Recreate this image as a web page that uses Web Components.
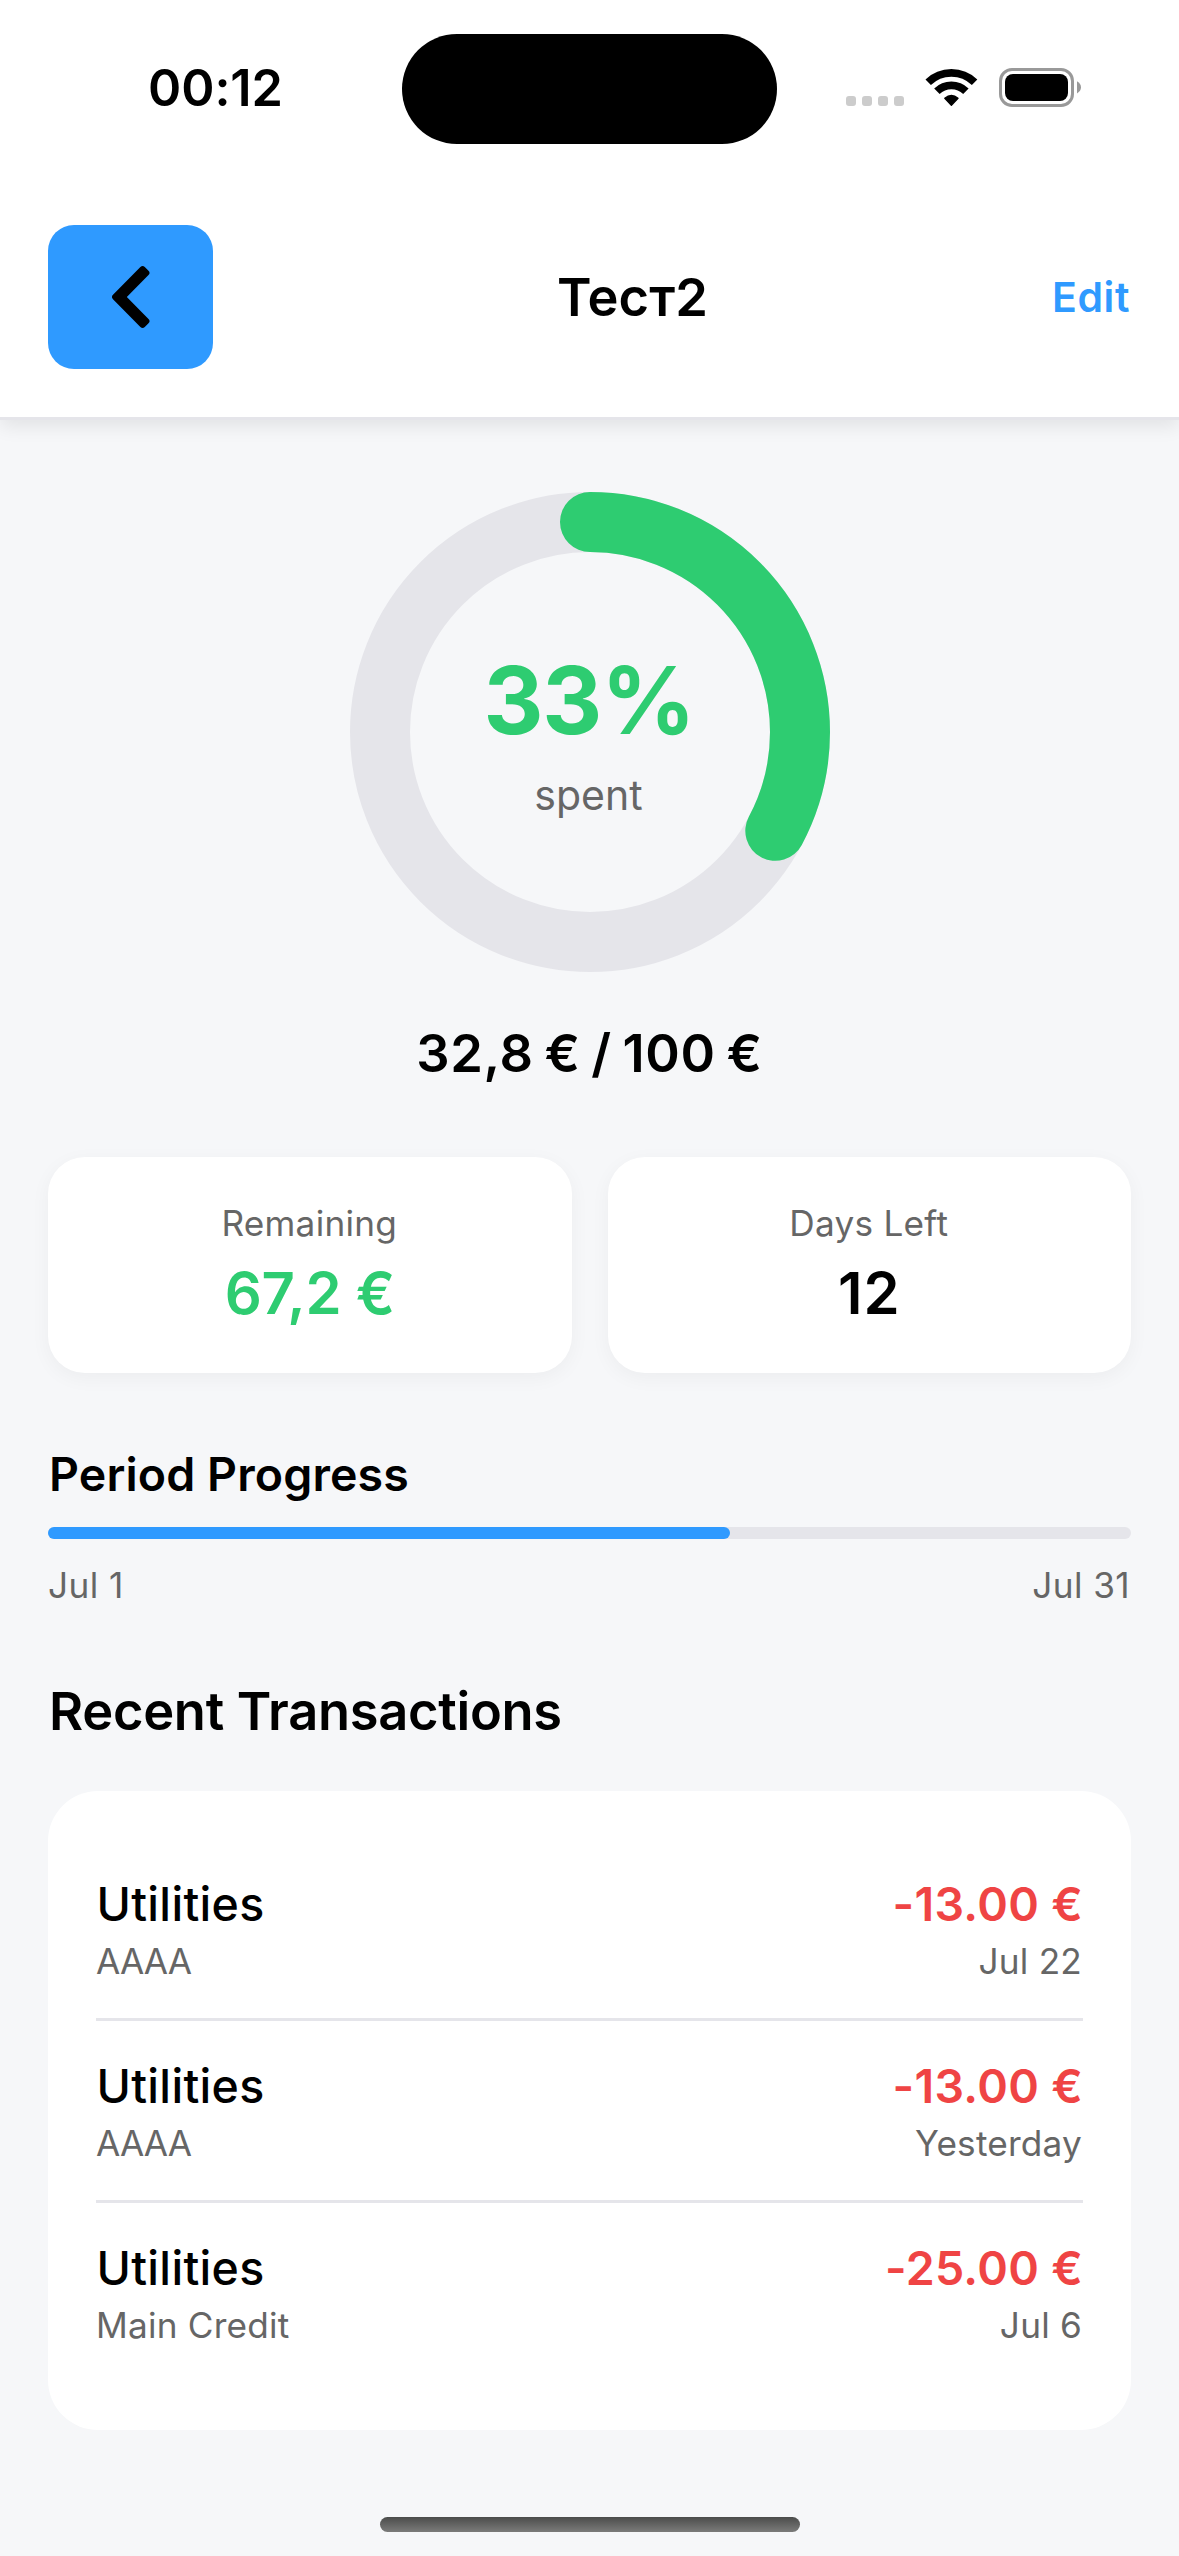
<!DOCTYPE html>
<html lang="en">
<head>
<meta charset="utf-8">
<title>Budget</title>
<style>
html,body{margin:0;padding:0}
body{width:1179px;height:2556px;overflow:hidden;background:#f6f7f9;color:#000;font-family:Inter,"Liberation Sans",sans-serif;-webkit-font-smoothing:antialiased}
</style>
</head>
<body>
<budget-screen></budget-screen>
<script>
const define = (name, html, setup) => {
  const template = document.createElement('template');
  template.innerHTML = html;
  customElements.define(name, class extends HTMLElement {
    constructor() {
      super();
      this.attachShadow({ mode: 'open' }).append(template.content.cloneNode(true));
    }
    connectedCallback() { if (setup) setup(this, this.shadowRoot); }
  });
};

define('status-bar', `
<style>
:host{display:grid;grid-template-columns:402px 375px 402px;height:177px;box-sizing:border-box;padding-top:33px;align-items:start;background:#fff}
.time{padding-left:29px;text-align:center;font-size:50.4px;font-weight:600;line-height:110px;letter-spacing:-.1px}
.island{height:110px;margin-top:1px;border-radius:55px;background:#000}
.right{display:flex;padding-left:69px;padding-top:35px;height:40px}
svg{display:block}
</style>
<div class="time">00:12</div>
<div class="island"></div>
<div class="right">
<svg width="240" height="40" viewBox="846 68 240 40">
<g fill="#ccc"><rect x="846" y="96" width="10" height="10" rx="3"/><rect x="862" y="96" width="10" height="10" rx="3"/><rect x="878" y="96" width="10" height="10" rx="3"/><rect x="894" y="96" width="10" height="10" rx="3"/></g>
<g fill="none" stroke="#000" stroke-width="7.8">
<path d="M928.2 82.3A33.3 33.3 0 0 1 974.6 82.3"/>
<path d="M936.9 91.2A20.8 20.8 0 0 1 965.9 91.2"/></g>
<path d="M951.4 105.2L944.8 98.3Q951.4 92.7 958 98.3Z" stroke="#000" stroke-width="1.4" stroke-linejoin="round"/>
<rect x="1000.5" y="69.5" width="72" height="36" rx="11.5" fill="none" stroke="#999" stroke-width="3"/>
<rect x="1005" y="74" width="63" height="27" rx="8"/>
<path d="M1077 81.2Q1081 83.5 1081 87.2T1077 93.4Z" fill="#999"/>
</svg>
</div>`);

define('nav-header', `
<style>
:host{display:flex;justify-content:space-between;align-items:center;height:243px;box-sizing:border-box;padding:0 48px;background:#fff;border-bottom:3px solid #e5e5ea;box-shadow:0 6px 18px rgba(0,0,0,.085);clip-path:inset(0 0 -40px 0)}
button{display:block;width:165px;height:144px;padding:0;border:0;border-radius:26px;background:#2f9aff}
svg{display:block}
h1{margin:0;font-size:52.4px;font-weight:600;line-height:64px;letter-spacing:.1px}
.edit{color:#2f9aff;font-size:41px;font-weight:600;line-height:50px;letter-spacing:.6px;padding-right:1px}
</style>
<button aria-label="Back"><svg width="165" height="144" viewBox="48 225 165 144"><path d="M115.2 297L142.6 269.2L146.3 272.9L122.4 297L146.3 321.1L142.6 324.8Z" stroke="#000" stroke-width="6.2" stroke-linejoin="round"/></svg></button>
<h1><slot></slot></h1>
<span class="edit">Edit</span>`);

define('progress-ring', `
<style>
:host{display:grid;width:480px;height:480px;margin:72px 0 0 1px}
svg,.label{grid-area:1/1}
.label{display:flex;flex-direction:column;align-items:center;padding-top:152px}
.value{color:#2ecc71;font-size:93px;font-weight:700;line-height:112px;letter-spacing:-1.2px;padding-right:2px}
.caption{color:#666;font-size:41px;line-height:50px;margin-top:14px;padding-right:3px}
</style>
<svg width="480" height="480" viewBox="0 0 480 480" fill="none" stroke-width="60">
<circle cx="240" cy="240" r="210" stroke="#e5e5ea"/>
<circle class="arc" cx="240" cy="240" r="210" stroke="#2ecc71" stroke-linecap="round" transform="rotate(-90 240 240)" pathLength="100"/>
</svg>
<div class="label"><div class="value"></div><div class="caption"><slot></slot></div></div>`, (el, root) => {
  const p = parseFloat(el.getAttribute('percent'));
  root.querySelector('.arc').setAttribute('stroke-dasharray', p + ' 100');
  root.querySelector('.value').textContent = Math.round(p) + '%';
});

define('stat-card', `
<style>
:host{display:flex;flex:1;flex-direction:column;align-items:center;box-sizing:border-box;height:216px;padding-top:45px;gap:13px;border-radius:37px;background:#fff;box-shadow:0 5px 20px rgba(0,0,0,.045)}
.label{color:#666;font-size:35.2px;line-height:42px;letter-spacing:.25px;padding-right:1px}
.value{color:var(--value,#000);font-size:58px;font-weight:600;line-height:72px;letter-spacing:var(--value-spacing,-.3px)}
</style>
<div class="label"><slot name="label"></slot></div><div class="value"><slot></slot></div>`);

define('period-progress', `
<style>
:host{display:block;margin-top:72px}
h2{margin:0 0 24px;padding-left:1px;font-size:46.5px;font-weight:600;line-height:58px;letter-spacing:.12px}
.track{height:12px;border-radius:6px;background:#e5e5ea}
.fill{height:12px;border-radius:6px;background:#2f9aff}
.dates{display:flex;justify-content:space-between;margin-top:25px;padding-right:1px;color:#666;font-size:35.2px;line-height:42px;letter-spacing:.4px}
</style>
<h2>Period Progress</h2>
<div class="track"><div class="fill"></div></div>
<div class="dates"><slot name="from"></slot><slot name="to"></slot></div>`, (el, root) => {
  root.querySelector('.fill').style.width = el.getAttribute('percent') + '%';
});

define('transaction-row', `
<style>
:host{display:flex;justify-content:space-between;padding:36px 0;border-bottom:3px solid #e5e5ea}
:host(:last-child){border-bottom:0}
.col{display:flex;flex-direction:column;gap:7px}
.end{align-items:flex-end}
.name,.amount{font-size:46.5px;line-height:58px}
.name{font-weight:500;letter-spacing:.3px;padding-left:.5px}
.amount{font-weight:600;color:#ef4444;letter-spacing:.3px}
.sub{color:#666;font-size:35.2px;line-height:42px;letter-spacing:.2px}
.end .sub{padding-right:1px}
</style>
<div class="col"><div class="name"><slot></slot></div><div class="sub"><slot name="account"></slot></div></div>
<div class="col end"><div class="amount"><slot name="amount"></slot></div><div class="sub"><slot name="date"></slot></div></div>`);

define('transaction-list', `
<style>
:host{display:block}
h2{margin:73px 0 48px;padding-left:1px;font-size:52.4px;font-weight:600;line-height:64px;letter-spacing:-.28px}
.card{padding:48px;border-radius:50px;background:#fff}
</style>
<h2>Recent Transactions</h2>
<div class="card"><slot></slot></div>`);

define('home-indicator', `
<style>
:host{display:flex;justify-content:center;padding-bottom:24px}
i{display:block;width:420px;height:15px;border-radius:8px;background:linear-gradient(#4b4c4b,#7b7b7a)}
</style><i></i>`);

define('budget-screen', `
<style>
:host{display:flex;flex-direction:column;width:1179px;height:2556px}
main{flex:1;padding:0 48px;display:flex;flex-direction:column}
progress-ring{align-self:center}
.total{margin:49px 0 72px;text-align:center;font-size:52.4px;font-weight:600;line-height:64px;letter-spacing:.6px;word-spacing:-3px;white-space:pre}
.stats{display:flex;gap:36px}
.caps{letter-spacing:-.9px}
</style>
<status-bar></status-bar>
<nav-header>Тест2</nav-header>
<main>
<progress-ring percent="32.8">spent</progress-ring>
<div class="total">32,8 € / 100 €</div>
<div class="stats">
<stat-card style="--value:#2ecc71"><span slot="label">Remaining</span>67,2 €</stat-card>
<stat-card style="--value-spacing:1px"><span slot="label">Days Left</span>12</stat-card>
</div>
<period-progress percent="62.97"><span slot="from">Jul 1</span><span slot="to">Jul 31</span></period-progress>
<transaction-list>
<transaction-row>Utilities<span slot="account" class="caps">AAAA</span><span slot="amount">-13.00 €</span><span slot="date">Jul 22</span></transaction-row>
<transaction-row>Utilities<span slot="account" class="caps">AAAA</span><span slot="amount">-13.00 €</span><span slot="date">Yesterday</span></transaction-row>
<transaction-row>Utilities<span slot="account">Main Credit</span><span slot="amount">-25.00 €</span><span slot="date">Jul 6</span></transaction-row>
</transaction-list>
</main>
<home-indicator></home-indicator>`);
</script>
</body>
</html>
